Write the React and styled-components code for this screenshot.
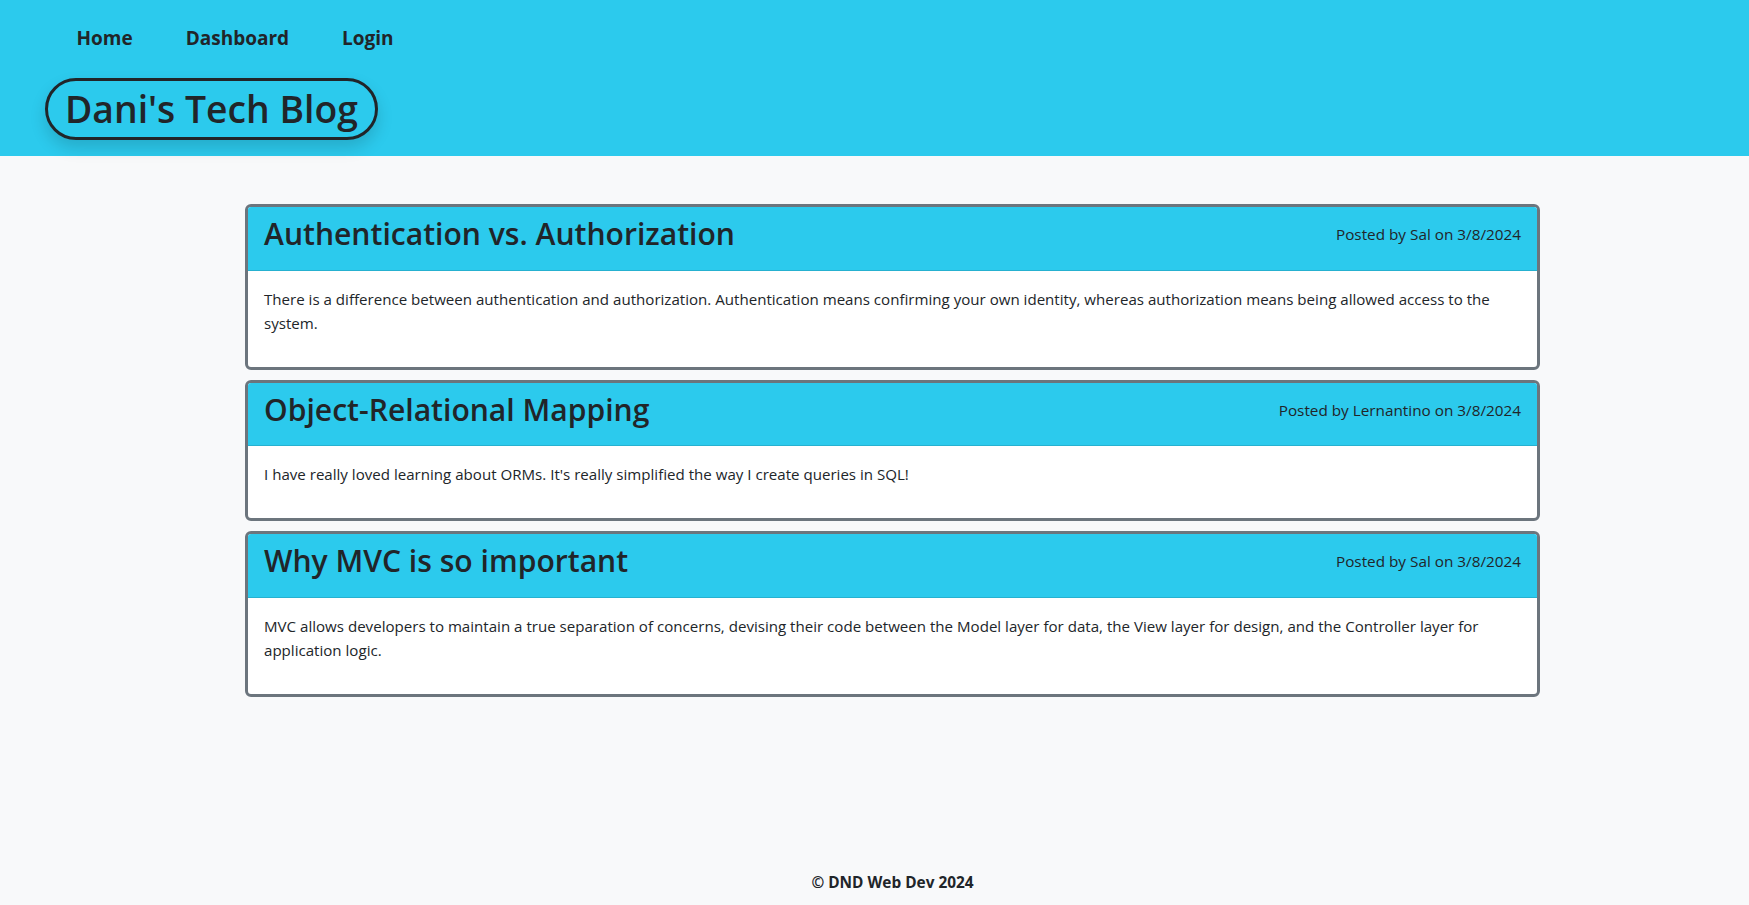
import React from "react";
import styled, { createGlobalStyle } from "styled-components";

const GlobalStyle = createGlobalStyle`
  html, body { margin: 0; padding: 0; }
  body {
    font-family: "Open Sans", "Noto Sans", sans-serif;
    color: #212529;
    background: #f8f9fa;
  }
  * { box-sizing: border-box; }
`;

const Page = styled.div`
  min-height: 100vh;
  display: flex;
  flex-direction: column;
  background: #f8f9fa;
`;

const Header = styled.header`
  background: #2ccaed;
  padding: 15px 45px 16px;
  display: flex;
  flex-direction: column;
  align-items: flex-start;
`;

const Nav = styled.nav`
  display: flex;
  padding-left: 5px;
`;

const NavLink = styled.a`
  padding: 8px 26.5px;
  font-size: 19px;
  line-height: 30px;
  font-weight: 700;
  color: #212529;
  text-decoration: none;
`;

const Brand = styled.h1`
  margin: 17px 0 0;
  padding: 4px 17px;
  border: 3px solid #212529;
  border-radius: 50px;
  font-size: 37.3px;
  line-height: 48px;
  font-weight: 600;
  box-shadow: 0 8px 16px rgba(0, 0, 0, 0.15);
`;

const Content = styled.div`
  flex: 1;
  display: flex;
  flex-direction: column;
  padding-left: 36px;
`;

const Main = styled.main`
  flex: 1;
  padding-top: 48px;
`;

const Container = styled.div`
  max-width: 1295px;
  margin: 0 auto;
`;

const Card = styled.article`
  background: #fff;
  border: 3px solid #6c757d;
  border-radius: 6px;
  overflow: hidden;
  margin-bottom: 10px;
`;

const CardHeader = styled.div`
  background: #2ccaed;
  border-bottom: 1px solid rgba(0, 0, 0, 0.12);
  padding: 8px 16px 16px;
  display: flex;
  justify-content: space-between;
  align-items: center;
`;

const Title = styled.h2`
  margin: 0;
  font-size: 30.1px;
  line-height: 38.6px;
  font-weight: 600;
`;

const Meta = styled.span`
  font-size: 15.3px;
  line-height: 24px;
`;

const CardBody = styled.div`
  padding: 16px;
`;

const Text = styled.p`
  margin: 0 0 16px;
  font-size: 15.1px;
  line-height: 24px;
`;

const Footer = styled.footer`
  text-align: center;
  padding: 8px 0 10px;
  font-size: 15.4px;
  line-height: 24px;
  font-weight: 700;
`;

const posts = [
  {
    title: "Authentication vs. Authorization",
    author: "Sal",
    date: "3/8/2024",
    body:
      "There is a difference between authentication and authorization. Authentication means confirming your own identity, whereas authorization means being allowed access to the system.",
  },
  {
    title: "Object-Relational Mapping",
    author: "Lernantino",
    date: "3/8/2024",
    body:
      "I have really loved learning about ORMs. It's really simplified the way I create queries in SQL!",
  },
  {
    title: "Why MVC is so important",
    author: "Sal",
    date: "3/8/2024",
    body:
      "MVC allows developers to maintain a true separation of concerns, devising their code between the Model layer for data, the View layer for design, and the Controller layer for application logic.",
  },
];

export default function App() {
  return (
    <Page>
      <GlobalStyle />
      <Header>
        <Nav>
          <NavLink href="#">Home</NavLink>
          <NavLink href="#">Dashboard</NavLink>
          <NavLink href="#">Login</NavLink>
        </Nav>
        <Brand>Dani's Tech Blog</Brand>
      </Header>
      <Content>
        <Main>
          <Container>
            {posts.map((p) => (
              <Card key={p.title}>
                <CardHeader>
                  <Title>{p.title}</Title>
                  <Meta>
                    Posted by {p.author} on {p.date}
                  </Meta>
                </CardHeader>
                <CardBody>
                  <Text>{p.body}</Text>
                </CardBody>
              </Card>
            ))}
          </Container>
        </Main>
        <Footer>© DND Web Dev 2024</Footer>
      </Content>
    </Page>
  );
}
